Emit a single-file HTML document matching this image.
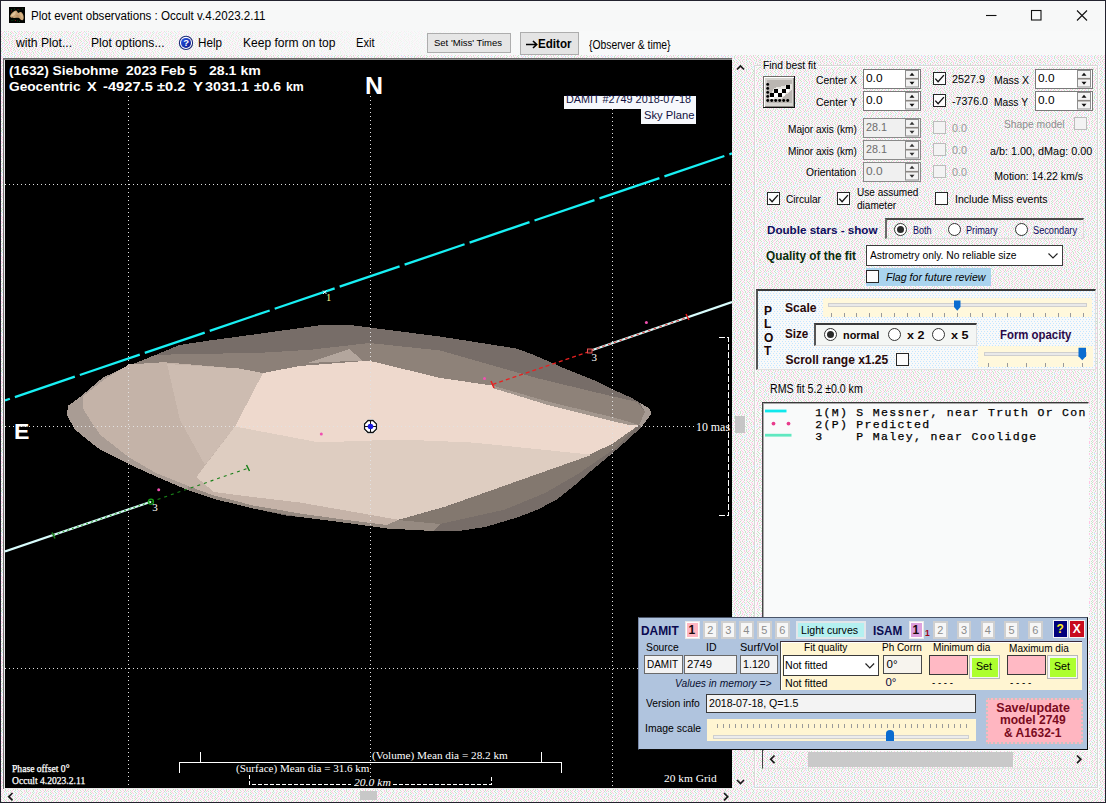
<!DOCTYPE html>
<html><head><meta charset="utf-8"><title>Plot event observations</title>
<style>
*{box-sizing:border-box;margin:0;padding:0}
html,body{width:1106px;height:803px;overflow:hidden;background:#f1f1f1;font-family:"Liberation Sans",sans-serif;font-size:11px;color:#000}
.a{position:absolute;white-space:nowrap}
#win{position:absolute;left:0;top:0;width:1106px;height:803px;background:#efefef;overflow:hidden}
.inp{position:absolute;background:#fff;border:1px solid #7a7a7a}
.inp.dis{background:#f0f0f0;border-color:#8a8a8a}
.cb{position:absolute;width:13px;height:13px;background:#fff;border:1px solid #333}
.cb.dis{border-color:#bcbcbc;background:#f3f3f3}
.cb.on::after{content:"";position:absolute;left:3.5px;top:0.5px;width:4px;height:7.5px;border:solid #111;border-width:0 1.4px 1.4px 0;transform:rotate(40deg)}
.rb{position:absolute;width:13px;height:13px;background:#fff;border:1px solid #333;border-radius:50%}
.rb.on::after{content:"";position:absolute;left:2px;top:2px;width:7px;height:7px;border-radius:50%;background:#2a2a2a}
.sp{position:absolute;width:15px;background:#f0f0f0;border-left:1px solid #c8c8c8}
.sp::before,.sp::after{content:"";position:absolute;left:4px;border:3px solid transparent}
.sp::before{top:1px;border-top-width:0;border-bottom:4px solid #222}
.sp::after{bottom:1px;border-bottom-width:0;border-top:4px solid #222}
</style></head><body>
<div id="win">
<div class="a" style="left:0px;top:0px;width:1106px;height:803px;border:1px solid #23232f;z-index:50;pointer-events:none"></div>
<svg class="a" style="left:0;top:31px" width="1106" height="772" shape-rendering="crispEdges"><defs><pattern id="dz" width="40" height="40" patternUnits="userSpaceOnUse"><rect width="40" height="40" fill="#f8f9f9"/><path fill="#ffc8e4" d="M1 0h1v1h-1zM6 0h1v1h-1zM11 0h1v1h-1zM19 0h1v1h-1zM24 0h1v1h-1zM28 0h1v1h-1zM37 0h1v1h-1zM3 1h1v1h-1zM12 1h1v1h-1zM18 1h1v1h-1zM25 1h1v1h-1zM30 1h1v1h-1zM36 1h1v1h-1zM2 2h1v1h-1zM8 2h1v1h-1zM13 2h1v1h-1zM19 2h1v1h-1zM24 2h1v1h-1zM30 2h1v1h-1zM36 2h1v1h-1zM1 3h1v1h-1zM8 3h1v1h-1zM18 3h1v1h-1zM23 3h1v1h-1zM29 3h1v1h-1zM35 3h1v1h-1zM2 4h1v1h-1zM11 4h1v1h-1zM17 4h1v1h-1zM28 4h1v1h-1zM33 4h1v1h-1zM38 4h1v1h-1zM4 5h1v1h-1zM10 5h1v1h-1zM14 5h1v1h-1zM20 5h1v1h-1zM29 5h1v1h-1zM35 5h1v1h-1zM2 6h1v1h-1zM6 6h1v1h-1zM11 6h1v1h-1zM17 6h1v1h-1zM27 6h1v1h-1zM33 6h1v1h-1zM0 7h1v1h-1zM9 7h1v1h-1zM14 7h1v1h-1zM19 7h1v1h-1zM31 7h1v1h-1zM36 7h1v1h-1zM1 8h1v1h-1zM6 8h1v1h-1zM10 8h1v1h-1zM18 8h1v1h-1zM22 8h1v1h-1zM27 8h1v1h-1zM32 8h1v1h-1zM39 8h1v1h-1zM3 9h1v1h-1zM8 9h1v1h-1zM14 9h1v1h-1zM21 9h1v1h-1zM26 9h1v1h-1zM33 9h1v1h-1zM38 9h1v1h-1zM4 10h1v1h-1zM9 10h1v1h-1zM13 10h1v1h-1zM18 10h1v1h-1zM23 10h1v1h-1zM29 10h1v1h-1zM34 10h1v1h-1zM0 11h1v1h-1zM9 11h1v1h-1zM15 11h1v1h-1zM22 11h1v1h-1zM26 11h1v1h-1zM31 11h1v1h-1zM37 11h1v1h-1zM4 12h1v1h-1zM9 12h1v1h-1zM14 12h1v1h-1zM18 12h1v1h-1zM25 12h1v1h-1zM32 12h1v1h-1zM37 12h1v1h-1zM1 13h1v1h-1zM8 13h1v1h-1zM14 13h1v1h-1zM20 13h1v1h-1zM27 13h1v1h-1zM32 13h1v1h-1zM37 13h1v1h-1zM4 14h1v1h-1zM11 14h1v1h-1zM18 14h1v1h-1zM26 14h1v1h-1zM31 14h1v1h-1zM36 14h1v1h-1zM6 15h1v1h-1zM14 15h1v1h-1zM20 15h1v1h-1zM30 15h1v1h-1zM38 15h1v1h-1zM2 16h1v1h-1zM7 16h1v1h-1zM11 16h1v1h-1zM16 16h1v1h-1zM21 16h1v1h-1zM26 16h1v1h-1zM31 16h1v1h-1zM36 16h1v1h-1zM4 17h1v1h-1zM10 17h1v1h-1zM16 17h1v1h-1zM22 17h1v1h-1zM27 17h1v1h-1zM33 17h1v1h-1zM38 17h1v1h-1zM5 18h1v1h-1zM11 18h1v1h-1zM17 18h1v1h-1zM23 18h1v1h-1zM30 18h1v1h-1zM35 18h1v1h-1zM39 18h1v1h-1zM4 19h1v1h-1zM10 19h1v1h-1zM15 19h1v1h-1zM21 19h1v1h-1zM27 19h1v1h-1zM31 19h1v1h-1zM38 19h1v1h-1zM3 20h1v1h-1zM11 20h1v1h-1zM17 20h1v1h-1zM22 20h1v1h-1zM28 20h1v1h-1zM35 20h1v1h-1zM5 21h1v1h-1zM8 21h1v1h-1zM14 21h1v1h-1zM23 21h1v1h-1zM27 21h1v1h-1zM31 21h1v1h-1zM35 21h1v1h-1zM1 22h1v1h-1zM9 22h1v1h-1zM16 22h1v1h-1zM22 22h1v1h-1zM30 22h1v1h-1zM36 22h1v1h-1zM0 23h1v1h-1zM6 23h1v1h-1zM9 23h1v1h-1zM17 23h1v1h-1zM22 23h1v1h-1zM29 23h1v1h-1zM34 23h1v1h-1zM4 24h1v1h-1zM11 24h1v1h-1zM18 24h1v1h-1zM24 24h1v1h-1zM30 24h1v1h-1zM35 24h1v1h-1zM1 25h1v1h-1zM7 25h1v1h-1zM17 25h1v1h-1zM23 25h1v1h-1zM29 25h1v1h-1zM33 25h1v1h-1zM2 26h1v1h-1zM11 26h1v1h-1zM16 26h1v1h-1zM20 26h1v1h-1zM24 26h1v1h-1zM31 26h1v1h-1zM36 26h1v1h-1zM1 27h1v1h-1zM7 27h1v1h-1zM12 27h1v1h-1zM17 27h1v1h-1zM27 27h1v1h-1zM32 27h1v1h-1zM39 27h1v1h-1zM2 28h1v1h-1zM11 28h1v1h-1zM20 28h1v1h-1zM24 28h1v1h-1zM28 28h1v1h-1zM33 28h1v1h-1zM38 28h1v1h-1zM4 29h1v1h-1zM10 29h1v1h-1zM16 29h1v1h-1zM22 29h1v1h-1zM31 29h1v1h-1zM36 29h1v1h-1zM1 30h1v1h-1zM5 30h1v1h-1zM9 30h1v1h-1zM20 30h1v1h-1zM24 30h1v1h-1zM32 30h1v1h-1zM38 30h1v1h-1zM2 31h1v1h-1zM8 31h1v1h-1zM14 31h1v1h-1zM18 31h1v1h-1zM23 31h1v1h-1zM29 31h1v1h-1zM33 31h1v1h-1zM1 32h1v1h-1zM7 32h1v1h-1zM13 32h1v1h-1zM21 32h1v1h-1zM27 32h1v1h-1zM33 32h1v1h-1zM37 32h1v1h-1zM8 33h1v1h-1zM12 33h1v1h-1zM18 33h1v1h-1zM23 33h1v1h-1zM28 33h1v1h-1zM33 33h1v1h-1zM39 33h1v1h-1zM6 34h1v1h-1zM16 34h1v1h-1zM24 34h1v1h-1zM30 34h1v1h-1zM1 35h1v1h-1zM5 35h1v1h-1zM18 35h1v1h-1zM28 35h1v1h-1zM39 35h1v1h-1zM4 36h1v1h-1zM9 36h1v1h-1zM14 36h1v1h-1zM20 36h1v1h-1zM24 36h1v1h-1zM29 36h1v1h-1zM36 36h1v1h-1zM1 37h1v1h-1zM7 37h1v1h-1zM11 37h1v1h-1zM16 37h1v1h-1zM21 37h1v1h-1zM28 37h1v1h-1zM35 37h1v1h-1zM2 38h1v1h-1zM8 38h1v1h-1zM15 38h1v1h-1zM21 38h1v1h-1zM30 38h1v1h-1zM34 38h1v1h-1zM39 38h1v1h-1zM3 39h1v1h-1zM7 39h1v1h-1zM12 39h1v1h-1zM18 39h1v1h-1zM24 39h1v1h-1zM29 39h1v1h-1zM36 39h1v1h-1z"/><path fill="#c8e4c8" d="M4 0h1v1h-1zM8 0h1v1h-1zM14 0h1v1h-1zM21 0h1v1h-1zM26 0h1v1h-1zM33 0h1v1h-1zM0 1h1v1h-1zM10 1h1v1h-1zM15 1h1v1h-1zM22 1h1v1h-1zM27 1h1v1h-1zM32 1h1v1h-1zM39 1h1v1h-1zM6 2h1v1h-1zM11 2h1v1h-1zM16 2h1v1h-1zM21 2h1v1h-1zM28 2h1v1h-1zM33 2h1v1h-1zM38 2h1v1h-1zM4 3h1v1h-1zM10 3h1v1h-1zM20 3h1v1h-1zM26 3h1v1h-1zM32 3h1v1h-1zM39 3h1v1h-1zM8 4h1v1h-1zM15 4h1v1h-1zM21 4h1v1h-1zM31 4h1v1h-1zM36 4h1v1h-1zM1 5h1v1h-1zM7 5h1v1h-1zM12 5h1v1h-1zM18 5h1v1h-1zM22 5h1v1h-1zM31 5h1v1h-1zM37 5h1v1h-1zM4 6h1v1h-1zM8 6h1v1h-1zM15 6h1v1h-1zM24 6h1v1h-1zM30 6h1v1h-1zM38 6h1v1h-1zM3 7h1v1h-1zM12 7h1v1h-1zM16 7h1v1h-1zM26 7h1v1h-1zM33 7h1v1h-1zM38 7h1v1h-1zM4 8h1v1h-1zM8 8h1v1h-1zM15 8h1v1h-1zM20 8h1v1h-1zM24 8h1v1h-1zM29 8h1v1h-1zM35 8h1v1h-1zM0 9h1v1h-1zM5 9h1v1h-1zM12 9h1v1h-1zM17 9h1v1h-1zM24 9h1v1h-1zM30 9h1v1h-1zM36 9h1v1h-1zM1 10h1v1h-1zM6 10h1v1h-1zM11 10h1v1h-1zM16 10h1v1h-1zM20 10h1v1h-1zM27 10h1v1h-1zM32 10h1v1h-1zM38 10h1v1h-1zM7 11h1v1h-1zM12 11h1v1h-1zM19 11h1v1h-1zM24 11h1v1h-1zM28 11h1v1h-1zM35 11h1v1h-1zM2 12h1v1h-1zM6 12h1v1h-1zM11 12h1v1h-1zM16 12h1v1h-1zM21 12h1v1h-1zM29 12h1v1h-1zM34 12h1v1h-1zM39 12h1v1h-1zM5 13h1v1h-1zM12 13h1v1h-1zM17 13h1v1h-1zM22 13h1v1h-1zM30 13h1v1h-1zM35 13h1v1h-1zM0 14h1v1h-1zM7 14h1v1h-1zM15 14h1v1h-1zM21 14h1v1h-1zM28 14h1v1h-1zM33 14h1v1h-1zM39 14h1v1h-1zM12 15h1v1h-1zM17 15h1v1h-1zM23 15h1v1h-1zM35 15h1v1h-1zM0 16h1v1h-1zM5 16h1v1h-1zM9 16h1v1h-1zM14 16h1v1h-1zM18 16h1v1h-1zM24 16h1v1h-1zM29 16h1v1h-1zM33 16h1v1h-1zM1 17h1v1h-1zM7 17h1v1h-1zM13 17h1v1h-1zM20 17h1v1h-1zM24 17h1v1h-1zM29 17h1v1h-1zM35 17h1v1h-1zM2 18h1v1h-1zM8 18h1v1h-1zM14 18h1v1h-1zM19 18h1v1h-1zM26 18h1v1h-1zM32 18h1v1h-1zM37 18h1v1h-1zM1 19h1v1h-1zM8 19h1v1h-1zM13 19h1v1h-1zM18 19h1v1h-1zM24 19h1v1h-1zM29 19h1v1h-1zM34 19h1v1h-1zM1 20h1v1h-1zM9 20h1v1h-1zM15 20h1v1h-1zM20 20h1v1h-1zM25 20h1v1h-1zM32 20h1v1h-1zM37 20h1v1h-1zM7 21h1v1h-1zM12 21h1v1h-1zM20 21h1v1h-1zM25 21h1v1h-1zM29 21h1v1h-1zM33 21h1v1h-1zM38 21h1v1h-1zM4 22h1v1h-1zM11 22h1v1h-1zM20 22h1v1h-1zM26 22h1v1h-1zM33 22h1v1h-1zM39 22h1v1h-1zM3 23h1v1h-1zM7 23h1v1h-1zM12 23h1v1h-1zM19 23h1v1h-1zM24 23h1v1h-1zM31 23h1v1h-1zM37 23h1v1h-1zM8 24h1v1h-1zM15 24h1v1h-1zM21 24h1v1h-1zM26 24h1v1h-1zM33 24h1v1h-1zM38 24h1v1h-1zM5 25h1v1h-1zM14 25h1v1h-1zM20 25h1v1h-1zM27 25h1v1h-1zM31 25h1v1h-1zM37 25h1v1h-1zM8 26h1v1h-1zM14 26h1v1h-1zM18 26h1v1h-1zM22 26h1v1h-1zM26 26h1v1h-1zM34 26h1v1h-1zM38 26h1v1h-1zM4 27h1v1h-1zM9 27h1v1h-1zM14 27h1v1h-1zM21 27h1v1h-1zM29 27h1v1h-1zM35 27h1v1h-1zM0 28h1v1h-1zM5 28h1v1h-1zM18 28h1v1h-1zM23 28h1v1h-1zM26 28h1v1h-1zM30 28h1v1h-1zM36 28h1v1h-1zM0 29h1v1h-1zM7 29h1v1h-1zM13 29h1v1h-1zM19 29h1v1h-1zM26 29h1v1h-1zM34 29h1v1h-1zM39 29h1v1h-1zM3 30h1v1h-1zM7 30h1v1h-1zM14 30h1v1h-1zM22 30h1v1h-1zM29 30h1v1h-1zM36 30h1v1h-1zM0 31h1v1h-1zM4 31h1v1h-1zM12 31h1v1h-1zM16 31h1v1h-1zM20 31h1v1h-1zM26 31h1v1h-1zM31 31h1v1h-1zM39 31h1v1h-1zM5 32h1v1h-1zM10 32h1v1h-1zM17 32h1v1h-1zM24 32h1v1h-1zM30 32h1v1h-1zM35 32h1v1h-1zM3 33h1v1h-1zM10 33h1v1h-1zM15 33h1v1h-1zM20 33h1v1h-1zM26 33h1v1h-1zM31 33h1v1h-1zM37 33h1v1h-1zM2 34h1v1h-1zM14 34h1v1h-1zM22 34h1v1h-1zM27 34h1v1h-1zM34 34h1v1h-1zM3 35h1v1h-1zM11 35h1v1h-1zM25 35h1v1h-1zM31 35h1v1h-1zM0 36h1v1h-1zM6 36h1v1h-1zM12 36h1v1h-1zM17 36h1v1h-1zM22 36h1v1h-1zM26 36h1v1h-1zM34 36h1v1h-1zM39 36h1v1h-1zM3 37h1v1h-1zM9 37h1v1h-1zM13 37h1v1h-1zM19 37h1v1h-1zM24 37h1v1h-1zM31 37h1v1h-1zM38 37h1v1h-1zM5 38h1v1h-1zM13 38h1v1h-1zM17 38h1v1h-1zM26 38h1v1h-1zM32 38h1v1h-1zM37 38h1v1h-1zM0 39h1v1h-1zM5 39h1v1h-1zM10 39h1v1h-1zM15 39h1v1h-1zM20 39h1v1h-1zM26 39h1v1h-1zM33 39h1v1h-1z"/><path fill="#c8e8ff" d="M17 0h1v1h-1zM5 1h1v1h-1zM34 1h1v1h-1zM6 3h1v1h-1zM15 3h1v1h-1zM0 4h1v1h-1zM5 4h1v1h-1zM13 4h1v1h-1zM24 4h1v1h-1zM26 4h1v1h-1zM25 5h1v1h-1zM22 6h1v1h-1zM35 6h1v1h-1zM21 7h1v1h-1zM28 7h1v1h-1zM3 11h1v1h-1zM24 13h1v1h-1zM2 14h1v1h-1zM9 14h1v1h-1zM24 14h1v1h-1zM3 15h1v1h-1zM27 15h1v1h-1zM39 16h1v1h-1zM6 19h1v1h-1zM2 21h1v1h-1zM18 21h1v1h-1zM14 22h1v1h-1zM14 23h1v1h-1zM27 23h1v1h-1zM1 24h1v1h-1zM3 25h1v1h-1zM10 25h1v1h-1zM12 25h1v1h-1zM5 26h1v1h-1zM8 28h1v1h-1zM15 28h1v1h-1zM11 30h1v1h-1zM17 30h1v1h-1zM27 30h1v1h-1zM35 31h1v1h-1zM0 33h1v1h-1zM5 33h1v1h-1zM9 34h1v1h-1zM12 34h1v1h-1zM19 34h1v1h-1zM36 34h1v1h-1zM8 35h1v1h-1zM15 35h1v1h-1zM21 35h1v1h-1zM33 35h1v1h-1zM37 35h1v1h-1zM32 36h1v1h-1zM23 38h1v1h-1zM28 38h1v1h-1z"/></pattern><pattern id="dp" width="3" height="4" patternUnits="userSpaceOnUse"><rect width="3" height="4" fill="#f8f9f9"/><rect x="1" y="0" width="1" height="1" fill="#c4e6ff"/><rect x="0" y="2" width="1" height="1" fill="#c4e6ff"/></pattern></defs><rect width="1106" height="772" fill="url(#dz)"/></svg>
<div class="a" style="left:1px;top:1px;width:1104px;height:30px;background:#f7f8f8"></div>
<svg class="a" style="left:9px;top:7px" width="16" height="16" viewBox="0 0 16 16"><rect width="16" height="16" fill="#020402"/><path d="M1 9.300C1.500 7.500 3.500 5 5.500 4C6.500 3.300 7.500 3.200 8 4.200C8.500 5.200 9.200 6.200 9.800 5.800C10.500 5 11.500 4.800 12.500 5.300C13.800 6.200 14.800 8.500 14.700 10.500C14.700 12 14.300 13.200 13.200 13.200C12 13.200 11 12 10.200 11.100C9 10.600 7 11 5 10.900C3.500 10.800 1.500 11 1 9.300Z" fill="#c9a276"/><path d="M2 9C3 7 5 5 6.500 4.500C7 5.500 6.500 7.500 5 8.500C4 9 3 9.300 2 9Z" fill="#e2c49c"/><path d="M10.500 6.500C11.500 5.800 12.800 6.300 13.500 8C14 9.500 14 11.500 13.300 12.300C12.500 11 12 9 10.500 6.500Z" fill="#d8b888"/><path d="M7 8.500c1-.5 2.500-.5 3.500.5c-.5 1-2.500 1.200-3.500-.5z" fill="#b88a60"/><g fill="#0a4a14"><rect x="2" y="2" width="1" height="1"/><rect x="5" y="1.500" width="1" height="1"/><rect x="9.500" y="2.500" width="1" height="1"/><rect x="13" y="1.500" width="1" height="1"/><rect x="2.500" y="13" width="1" height="1"/><rect x="4.500" y="12.500" width="1" height="1"/><rect x="8" y="13.500" width="1" height="1"/><rect x="10" y="14" width="1" height="1"/></g><g fill="#7a1010"><rect x="2" y="3.500" width="1" height="1"/><rect x="8.500" y="2" width="1" height="1"/><rect x="6" y="13" width="1" height="1"/></g></svg>
<div class="a" style="left:30.50px;top:10.39px;font-size:12.5px;line-height:12.5px;transform:scaleX(0.9263);transform-origin:0 0;">Plot event observations : Occult v.4.2023.2.11</div>
<svg class="a" style="left:970px;top:1px" width="134" height="30" viewBox="970 1 134 30" fill="none" stroke="#111" stroke-width="1.1"><path d="M986 15.500h10.500"/><rect x="1031.500" y="10.500" width="9.500" height="9.500"/><path d="M1077 10.500l10 10M1087 10.500l-10 10"/></svg>
<div class="a" style="left:1px;top:31px;width:1104px;height:24px;background:linear-gradient(to right,rgba(248,249,249,0) 0,rgba(248,249,249,.55) 250px,rgba(248,249,249,1) 540px)"></div>
<div class="a" style="left:16.00px;top:37.09px;font-size:12.5px;line-height:12.5px;transform:scaleX(0.9712);transform-origin:0 0;">with Plot...</div>
<div class="a" style="left:91.00px;top:37.09px;font-size:12.5px;line-height:12.5px;transform:scaleX(0.9704);transform-origin:0 0;">Plot options...</div>
<svg class="a" style="left:178px;top:35px" width="16" height="16" viewBox="0 0 16 16"><defs><linearGradient id="hg" x1="0" y1="0" x2="1" y2="1"><stop offset="0" stop-color="#2a5ae8"/><stop offset="1" stop-color="#0a1488"/></linearGradient></defs><circle cx="8" cy="7.900" r="6.600" fill="#fff" stroke="#1c2c74" stroke-width="1.100"/><circle cx="8" cy="7.900" r="5" fill="url(#hg)"/><text x="8.200" y="11.300" font-family="Liberation Sans" font-weight="bold" font-size="9.500" fill="#fff" text-anchor="middle">?</text></svg>
<div class="a" style="left:197.50px;top:37.09px;font-size:12.5px;line-height:12.5px;transform:scaleX(0.9335);transform-origin:0 0;">Help</div>
<div class="a" style="left:243.00px;top:37.09px;font-size:12.5px;line-height:12.5px;transform:scaleX(0.9646);transform-origin:0 0;">Keep form on top</div>
<div class="a" style="left:355.50px;top:37.09px;font-size:12.5px;line-height:12.5px;transform:scaleX(0.8878);transform-origin:0 0;">Exit</div>
<div class="a" style="left:427px;top:33px;width:84px;height:20px;background:#e6e6e6;border:1px solid #adadad"></div>
<div class="a" style="left:434.00px;top:37.96px;font-size:9.5px;line-height:9.5px;">Set &#x27;Miss&#x27; Times</div>
<div class="a" style="left:520px;top:32px;width:59px;height:23px;background:#e4e4e4;border:1px solid #adadad"></div>
<svg class="a" style="left:525px;top:39px" width="14" height="11" viewBox="0 0 14 11" fill="none" stroke="#000" stroke-width="1.600"><path d="M1 5.500h10.500M8 2l3.700 3.500l-3.700 3.500"/></svg>
<div class="a" style="left:538.30px;top:37.41px;font-size:13.5px;line-height:13.5px;transform:scaleX(0.8590);transform-origin:0 0;font-weight:bold;">Editor</div>
<div class="a" style="left:589.00px;top:38.74px;font-size:12px;line-height:12px;transform:scaleX(0.8605);transform-origin:0 0;">{Observer &amp; time}</div>
<div class="a" style="left:3px;top:58px;width:729px;height:731px;background:#e8e8e8;border-left:1px solid #707070;border-top:1px solid #6a6a6a"></div>
<div class="a" style="left:4px;top:59px;width:728px;height:1px;background:#8c8c8c"></div>
<div id="plot" class="a" style="left:0px;top:0px;width:732px;height:788px;clip-path:inset(60px 0 0 5px);overflow:hidden;color:#fff">
<div class="a" style="left:5px;top:60px;width:727px;height:728px;background:#000"></div><svg class="a" style="left:5px;top:60px" width="727" height="728" viewBox="5 60 727 728">
<!-- asteroid -->
<g shape-rendering="crispEdges">
<polygon fill="#776d68" points="67,412 68.5,405.5 82,395.5 103,377.5 128,366 155.5,355 179.5,345 209.5,340.5 250,335 286,330 325.5,324.5 345.5,324.5 369.5,327.5 440,336.5 516.5,348.5 534,355 562.5,367.5 593.5,380 614,390 631,397.5 640,403 649.5,408.5 651.5,413.5 642,426.5 628,439.5 612,453.5 589.7,472.2 574.7,485.3 556,500.2 537.4,509.6 518.7,517 500,522.6 485,527 462,530.5 433,531 387,528.5 343.5,522.5 300,517 286,515.5 253.5,508.5 214,499 187.5,490 155,476 128.5,464 100,449.5 92,443.5 75,429.5 67,415.5"/>
<!-- left outer rim -->
<polygon fill="#a99c94" points="67,412 68.5,405.5 82,395.5 103,377.5 128,366 155.5,355 163.6,362.2 229,367.8 200,480 187.5,490 155,476 128.5,464 100,449.5 92,443.5 75,429.5 67,415.5"/>
<!-- mid band top-left -->
<polygon fill="#8c8078" points="127.7,366.2 155.6,354.8 260,352.8 310,349.8 369.5,343 369.5,361.5 355.5,362.5 300,367 263,374 229,367.8 163.6,362.2"/>
<polygon fill="#b3a69d" points="308,363 349.6,349 362,360.5"/>
<!-- right gray facet -->
<polygon fill="#8e8279" points="369.5,343 440,350.5 536.4,378 604.3,394.4 637.2,402 645,412 639,425 631,422.5 612,417 549.6,402 492.6,385.6 440,377.9 369.5,360.8"/>
<!-- big left facet -->
<polygon fill="#c4b3a8" points="82.6,408 83.5,396 104,379.500 129,364.500 163.6,362.2 229,367.8 263,373 235,426.5 196.4,477 187.6,485.7 155,472.500 128.5,457 100.5,435 92,423"/>
<polygon fill="#cdbcb1" points="167,364 239,368.5 263,373 235,426.5 205,465 180,420"/>
<polygon fill="#968a81" points="187.6,486 213.9,495.5 253.4,505.5 300,513.5 343.4,519.5 386.8,525 398.4,519.8 440,524 433,531 387,528.5 343.5,522.5 300,517 253.5,508.5 214,499 187.5,490"/>
<!-- low band -->
<polygon fill="#c5b3a8" points="196.4,477 213.9,492 300,502.5 398.4,519.8 386.8,525 343.4,519.5 300,513.5 253.4,505.5 213.9,495.5 187.6,486"/>
<!-- lower right lighter band -->
<polygon fill="#83786f" points="398,520 445,507 590,455 639,425 614,449 578,474 545,493 505,509.500 440,524"/>
<!-- light lower-central facet -->
<polygon fill="#decdc1" points="235,426.5 319,442.4 400,439.5 473.6,442.6 589.7,454.5 590,455.5 444.7,506.8 398.4,519.8 300,502.5 253,497 213.9,492 196.4,477"/>
<!-- intermediate -->

<!-- bright -->
<polygon fill="#eed9cd" points="263,373 300,366 355.5,361.7 369.5,360.8 440,377.9 492.6,385.6 549.6,402 612,417 631,422.5 639,425 612,444 589.7,454.5 473.6,442.6 400,439.5 319,442.4 235,426.5"/>
<polygon fill="#a69b94" points="640,403 649.5,408.5 651.5,413.5 642,426.5 639,425 645,412"/>
<polygon fill="#a3978e" points="492.6,385.6 549.6,402 612,417 631,422.5 639,425 631,425.5 612,421 549.6,405.500 492.6,388"/>
</g>
<!-- grid -->
<g stroke="#e2e2e2" stroke-width="1" stroke-dasharray="1 3" fill="none" shape-rendering="crispEdges">
<path d="M128.5 96V788M370.5 96V788M612.5 109V788"/>
<path d="M5 184.5H732M5 426.5H694M5 668.5H732"/>
</g>
<!-- cyan chord 1 -->
<line x1="5" y1="400.4" x2="732" y2="153.4" stroke="#18f0f4" stroke-width="2.3" stroke-dasharray="63.3 5.3" stroke-dashoffset="58.15"/>
<path d="M323 290.500l3.500 3.500M326.500 290.500l-3.500 3.500" stroke="#e6ffff" stroke-width="1"/>
<!-- chord 3 right -->
<line x1="591" y1="350.5" x2="732" y2="302" stroke="#d8fcfc" stroke-width="2.3"/>
<line x1="591" y1="350.5" x2="688" y2="317.2" stroke="#e03030" stroke-width="1" stroke-dasharray="3 3"/>
<line x1="492.6" y1="384.5" x2="589" y2="351.6" stroke="#e82020" stroke-width="1.3" stroke-dasharray="4 3"/>
<path d="M491 381l3 7M686 314l3 6" stroke="#e82020" stroke-width="1.5"/>
<rect x="587.5" y="349" width="4.500" height="4" fill="#281010" stroke="#e85050" stroke-width="1"/>
<!-- chord 3 left -->
<line x1="5" y1="551.5" x2="151" y2="501.7" stroke="#d8fcfc" stroke-width="2.2"/>
<line x1="53" y1="535.2" x2="151" y2="501.7" stroke="#20a020" stroke-width="1" stroke-dasharray="2 3"/>
<line x1="151" y1="501.7" x2="247.9" y2="468.2" stroke="#188018" stroke-width="1.1" stroke-dasharray="3 4"/>
<path d="M246.500 465l3 6M52 532.500l3 6" stroke="#188018" stroke-width="1.5"/>
<circle cx="151" cy="501.7" r="2.500" fill="none" stroke="#18a018" stroke-width="1.3"/>
<!-- pink dots -->
<g fill="#f050b0"><circle cx="321.300" cy="434" r="1.500"/><circle cx="484.500" cy="378.400" r="1.500"/><circle cx="158.700" cy="489.700" r="1.500"/><circle cx="646.400" cy="322.500" r="1.500"/></g>
<!-- center marker -->
<circle cx="370.500" cy="426.500" r="7.400" fill="#fff"/>
<polygon points="368,420.500 373,420.500 376.500,424 376.500,429 373,432.500 368,432.500 364.500,429 364.500,424" fill="#fff" stroke="#111" stroke-width="1.300"/>
<path d="M364.500 426.500h12M370.500 420.500v12" stroke="#111" stroke-width="1"/>
<circle cx="370.500" cy="426.500" r="2.800" fill="#1c1ce0"/>
<!-- bracket -->
<path d="M718.500 337.500H728.500V515.500H718.500" stroke="#fff" stroke-width="1" fill="none" stroke-dasharray="6 2" shape-rendering="crispEdges"/>
</svg>
<div class="a" style="left:8px;top:62px;width:298px;height:33px;background:#000"></div>
<div class="a" style="left:9.00px;top:63.85px;font-size:13px;line-height:13px;transform:scaleX(1.0589);transform-origin:0 0;font-weight:bold;color:#fff;">(1632) Siebohme</div>
<div class="a" style="left:126.00px;top:63.85px;font-size:13px;line-height:13px;transform:scaleX(1.0649);transform-origin:0 0;font-weight:bold;color:#fff;">2023 Feb 5</div>
<div class="a" style="left:209.00px;top:63.85px;font-size:13px;line-height:13px;transform:scaleX(1.0859);transform-origin:0 0;font-weight:bold;color:#fff;">28.1 km</div>
<div class="a" style="left:9.00px;top:79.65px;font-size:13px;line-height:13px;transform:scaleX(1.0528);transform-origin:0 0;font-weight:bold;color:#fff;">Geocentric</div>
<div class="a" style="left:87.30px;top:79.65px;font-size:13px;line-height:13px;transform:scaleX(1.1186);transform-origin:0 0;font-weight:bold;color:#fff;">X</div>
<div class="a" style="left:103.00px;top:79.65px;font-size:13px;line-height:13px;transform:scaleX(1.1294);transform-origin:0 0;font-weight:bold;color:#fff;">-4927.5</div>
<div class="a" style="left:157.00px;top:79.65px;font-size:13px;line-height:13px;transform:scaleX(1.1267);transform-origin:0 0;font-weight:bold;color:#fff;">±0.2</div>
<div class="a" style="left:192.50px;top:79.65px;font-size:13px;line-height:13px;transform:scaleX(1.1532);transform-origin:0 0;font-weight:bold;color:#fff;">Y</div>
<div class="a" style="left:205.00px;top:79.65px;font-size:13px;line-height:13px;transform:scaleX(1.1066);transform-origin:0 0;font-weight:bold;color:#fff;">3031.1</div>
<div class="a" style="left:254.00px;top:79.65px;font-size:13px;line-height:13px;transform:scaleX(1.0711);transform-origin:0 0;font-weight:bold;color:#fff;">±0.6</div>
<div class="a" style="left:286.00px;top:79.65px;font-size:13px;line-height:13px;transform:scaleX(0.9474);transform-origin:0 0;font-weight:bold;color:#fff;">km</div>
<div class="a" style="left:365.40px;top:75.32px;font-size:23.5px;line-height:23.5px;transform:scaleX(1.0606);transform-origin:0 0;font-weight:bold;color:#fff;">N</div>
<div class="a" style="left:14.20px;top:421.01px;font-size:22.5px;line-height:22.5px;transform:scaleX(1.0261);transform-origin:0 0;font-weight:bold;color:#fff;">E</div>
<div class="a" style="left:564px;top:96px;width:132px;height:13px;background:#f6f8fc;overflow:hidden"></div>
<div class="a" style="left:641px;top:108px;width:55px;height:16px;background:#f6f8fc"></div>
<div class="a" style="left:565.50px;top:94.23px;font-size:11px;line-height:11px;transform:scaleX(0.9843);transform-origin:0 0;color:#101040;">DAMIT #2749 2018-07-18</div>
<div class="a" style="left:643.50px;top:109.53px;font-size:11px;line-height:11px;transform:scaleX(1.0196);transform-origin:0 0;color:#101040;">Sky Plane</div>
<div class="a" style="left:696.30px;top:420.52px;font-size:12px;line-height:12px;transform:scaleX(0.9904);transform-origin:0 0;color:#fff;font-family:'Liberation Serif',serif;">10 mas</div>
<div class="a" style="left:326.00px;top:293.28px;font-size:10.5px;line-height:10.5px;color:#ffff90;font-family:'Liberation Serif',serif;">1</div>
<div class="a" style="left:591.50px;top:352.23px;font-size:11px;line-height:11px;color:#fff;font-family:'Liberation Serif',serif;">3</div>
<div class="a" style="left:152.30px;top:502.03px;font-size:11px;line-height:11px;color:#fff;font-family:'Liberation Serif',serif;">3</div>
<div class="a" style="left:11.80px;top:764.13px;font-size:10px;line-height:10px;transform:scaleX(0.9597);transform-origin:0 0;color:#fff;font-family:'Liberation Serif',serif;-webkit-text-stroke:.25px #fff;">Phase offset 0°</div>
<div class="a" style="left:11.80px;top:775.93px;font-size:10px;line-height:10px;transform:scaleX(0.9596);transform-origin:0 0;color:#fff;font-family:'Liberation Serif',serif;-webkit-text-stroke:.25px #fff;">Occult 4.2023.2.11</div>
<div class="a" style="left:371.90px;top:751.18px;font-size:10.5px;line-height:10.5px;transform:scaleX(1.0690);transform-origin:0 0;color:#fff;font-family:'Liberation Serif',serif;">(Volume) Mean dia = 28.2 km</div>
<div class="a" style="left:235.60px;top:764.18px;font-size:10.5px;line-height:10.5px;transform:scaleX(1.0535);transform-origin:0 0;color:#fff;font-family:'Liberation Serif',serif;">(Surface) Mean dia = 31.6 km</div>
<div class="a" style="left:353px;top:778px;width:39px;height:10px;background:#000"></div>
<div class="a" style="left:354.00px;top:778.08px;font-size:10.5px;line-height:10.5px;transform:scaleX(1.1070);transform-origin:0 0;font-style:italic;color:#fff;font-family:'Liberation Serif',serif;">20.0 km</div>
<div class="a" style="left:664.30px;top:773.98px;font-size:10.5px;line-height:10.5px;transform:scaleX(1.0885);transform-origin:0 0;color:#fff;font-family:'Liberation Serif',serif;">20 km Grid</div>
<svg class="a" style="left:5px;top:60px" width="727" height="728" viewBox="5 60 727 728" fill="none" stroke="#fff" stroke-width="1" shape-rendering="crispEdges">
<path d="M200.500 752V762.500M541.500 752V762.500M179.500 772.500V762.500H561.500V772.500"/>
<path d="M249.500 775V784.500H351" stroke-dasharray="4 2"/><path d="M393 784.500H491.500V775" stroke-dasharray="4 2"/>
</svg>
</div>
<svg class="a" style="left:732px;top:60px" width="17" height="728" viewBox="0 0 17 728" fill="none" stroke="#1a1a1a" stroke-width="1.700"><path d="M5 9.500l3.500-3.500l3.500 3.500"/><path d="M5 720l3.500 3.500l3.500-3.500"/><rect x="3" y="356" width="10" height="17" fill="#c6c6c6" stroke="none"/></svg>
<svg class="a" style="left:3px;top:788px" width="746" height="14" viewBox="3 788 746 14" fill="none" stroke="#1a1a1a" stroke-width="1.700"><path d="M12.500 793l-3.700 3.700l3.700 3.700"/><path d="M724 793l3.700 3.700l-3.700 3.700"/><rect x="360" y="791" width="17" height="9" fill="#c8c8c8" stroke="none"/></svg>
<div class="a" style="left:754px;top:65px;width:1px;height:723px;background:#d8d8d8"></div>
<div class="a" style="left:755px;top:66px;width:1px;height:721px;background:#fcfcfc"></div>
<div class="a" style="left:754px;top:65px;width:7px;height:1px;background:#d8d8d8"></div>
<div class="a" style="left:818px;top:65px;width:280px;height:1px;background:#d8d8d8"></div>
<div class="a" style="left:755px;top:66px;width:6px;height:1px;background:#fcfcfc"></div>
<div class="a" style="left:818px;top:66px;width:279px;height:1px;background:#fcfcfc"></div>
<div class="a" style="left:1097px;top:65px;width:1px;height:723px;background:#d8d8d8"></div>
<div class="a" style="left:1098px;top:65px;width:1px;height:724px;background:#fcfcfc"></div>
<div class="a" style="left:754px;top:787px;width:344px;height:1px;background:#d8d8d8"></div>
<div class="a" style="left:754px;top:788px;width:345px;height:1px;background:#fcfcfc"></div>
<div class="a" style="left:763.00px;top:59.68px;font-size:11.5px;line-height:11.5px;transform:scaleX(0.8916);transform-origin:0 0;">Find best fit</div>
<svg class="a" style="left:763px;top:76px" width="32" height="32" viewBox="0 0 32 32" shape-rendering="crispEdges">
<rect width="32" height="32" fill="#101010"/><rect width="30.500" height="30.500" fill="#6e6a66"/><rect x="1" y="1" width="29.500" height="29.500" fill="#fff"/><rect x="2" y="2" width="28.500" height="28.500" fill="#8c8884"/><rect x="2" y="2" width="27.500" height="27.500" fill="#d6d4d0"/>
<rect x="4" y="4" width="25" height="23" fill="#bab6b2"/><polygon points="6,22 11,12 29,8 29,14 18,23 6,23" fill="#e6e4e0"/>
<g fill="#000" shape-rendering="auto"><circle cx="4.700" cy="8.400" r="1.450"/><circle cx="4.700" cy="12.400" r="1.450"/><circle cx="4.700" cy="16.400" r="1.450"/><circle cx="4.700" cy="20.400" r="1.450"/><circle cx="4.700" cy="24.500" r="1.450"/><circle cx="8.700" cy="24.500" r="1.450"/><circle cx="12.700" cy="24.500" r="1.450"/><circle cx="16.700" cy="24.500" r="1.450"/><circle cx="20.700" cy="24.500" r="1.450"/><circle cx="24.700" cy="24.500" r="1.450"/></g>
<g fill="#000"><rect x="7" y="17" width="4" height="4"/><rect x="11" y="13" width="4" height="4"/><rect x="15" y="17" width="4" height="4"/><rect x="19" y="13" width="4" height="4"/><rect x="23" y="9" width="4" height="4"/></g>
<g fill="#fff"><rect x="11" y="17" width="4" height="4"/><rect x="15" y="13" width="4" height="4"/><rect x="19" y="17" width="3" height="3"/><rect x="23" y="13" width="3" height="3"/><rect x="7" y="21" width="4" height="2"/></g>
</svg>
<div class="a" style="left:816.00px;top:74.78px;font-size:11.5px;line-height:11.5px;transform:scaleX(0.9034);transform-origin:0 0;">Center X</div>
<div class="a" style="left:816.00px;top:96.78px;font-size:11.5px;line-height:11.5px;transform:scaleX(0.9076);transform-origin:0 0;">Center Y</div>
<div class="inp" style="left:863px;top:69px;width:58px;height:20px;"></div>
<svg class="a" style="left:904px;top:70px" width="16" height="18" viewBox="0 0 16 18"><rect x="1.500" y="0.500" width="13" height="16.500" fill="#f3f3f3" stroke="#8e8e8e"/><path d="M1.500 8.700h13" stroke="#8a8682" stroke-width="1.600"/><path d="M5.500 5.800l2.500-3l2.500 3zM5.500 11.800l2.500 3l2.500-3z" fill="#111"/></svg>
<div class="a" style="left:865.50px;top:72.78px;font-size:11.5px;line-height:11.5px;transform:scaleX(1.0321);transform-origin:0 0;">0.0</div>
<div class="inp" style="left:863px;top:91px;width:58px;height:20px;"></div>
<svg class="a" style="left:904px;top:92px" width="16" height="18" viewBox="0 0 16 18"><rect x="1.500" y="0.500" width="13" height="16.500" fill="#f3f3f3" stroke="#8e8e8e"/><path d="M1.500 8.700h13" stroke="#8a8682" stroke-width="1.600"/><path d="M5.500 5.800l2.500-3l2.500 3zM5.500 11.800l2.500 3l2.500-3z" fill="#111"/></svg>
<div class="a" style="left:865.50px;top:94.78px;font-size:11.5px;line-height:11.5px;transform:scaleX(1.0321);transform-origin:0 0;">0.0</div>
<svg class="a" style="left:933px;top:72px" width="13" height="13" viewBox="0 0 13 13"><rect x=".5" y=".5" width="12" height="12" fill="#fcfcfc" stroke="#262626"/><path d="M2.300 6.600l2.800 3.100l5.800-6.600" fill="none" stroke="#111" stroke-width="1.350"/></svg>
<svg class="a" style="left:933px;top:94px" width="13" height="13" viewBox="0 0 13 13"><rect x=".5" y=".5" width="12" height="12" fill="#fcfcfc" stroke="#262626"/><path d="M2.300 6.600l2.800 3.100l5.800-6.600" fill="none" stroke="#111" stroke-width="1.350"/></svg>
<div class="a" style="left:952.00px;top:73.88px;font-size:11.5px;line-height:11.5px;transform:scaleX(0.9382);transform-origin:0 0;">2527.9</div>
<div class="a" style="left:952.00px;top:95.88px;font-size:11.5px;line-height:11.5px;transform:scaleX(0.9230);transform-origin:0 0;">-7376.0</div>
<div class="a" style="left:994.00px;top:74.93px;font-size:11px;line-height:11px;transform:scaleX(0.9543);transform-origin:0 0;">Mass X</div>
<div class="a" style="left:994.00px;top:96.93px;font-size:11px;line-height:11px;transform:scaleX(0.9321);transform-origin:0 0;">Mass Y</div>
<div class="inp" style="left:1035px;top:69px;width:58px;height:20px;"></div>
<svg class="a" style="left:1076px;top:70px" width="16" height="18" viewBox="0 0 16 18"><rect x="1.500" y="0.500" width="13" height="16.500" fill="#f3f3f3" stroke="#8e8e8e"/><path d="M1.500 8.700h13" stroke="#8a8682" stroke-width="1.600"/><path d="M5.500 5.800l2.500-3l2.500 3zM5.500 11.800l2.500 3l2.500-3z" fill="#111"/></svg>
<div class="a" style="left:1037.50px;top:72.78px;font-size:11.5px;line-height:11.5px;transform:scaleX(1.0321);transform-origin:0 0;">0.0</div>
<div class="inp" style="left:1035px;top:91px;width:58px;height:20px;"></div>
<svg class="a" style="left:1076px;top:92px" width="16" height="18" viewBox="0 0 16 18"><rect x="1.500" y="0.500" width="13" height="16.500" fill="#f3f3f3" stroke="#8e8e8e"/><path d="M1.500 8.700h13" stroke="#8a8682" stroke-width="1.600"/><path d="M5.500 5.800l2.500-3l2.500 3zM5.500 11.800l2.500 3l2.500-3z" fill="#111"/></svg>
<div class="a" style="left:1037.50px;top:94.78px;font-size:11.5px;line-height:11.5px;transform:scaleX(1.0321);transform-origin:0 0;">0.0</div>
<div class="a" style="left:787.80px;top:124.08px;font-size:11.5px;line-height:11.5px;transform:scaleX(0.8755);transform-origin:0 0;">Major axis (km)</div>
<div class="a" style="left:787.80px;top:145.88px;font-size:11.5px;line-height:11.5px;transform:scaleX(0.8755);transform-origin:0 0;">Minor axis (km)</div>
<div class="a" style="left:805.70px;top:167.08px;font-size:11.5px;line-height:11.5px;transform:scaleX(0.8941);transform-origin:0 0;">Orientation</div>
<div class="inp dis" style="left:863px;top:118px;width:58px;height:20px;"></div>
<svg class="a" style="left:904px;top:119px" width="16" height="18" viewBox="0 0 16 18"><rect x="1.500" y="0.500" width="13" height="16.500" fill="#f3f3f3" stroke="#8e8e8e"/><path d="M1.500 8.700h13" stroke="#8a8682" stroke-width="1.600"/><path d="M5.500 5.800l2.500-3l2.500 3zM5.500 11.800l2.500 3l2.500-3z" fill="#333"/></svg>
<div class="a" style="left:865.50px;top:121.78px;font-size:11.5px;line-height:11.5px;transform:scaleX(0.9382);transform-origin:0 0;color:#6d6d6d;">28.1</div>
<div class="inp dis" style="left:863px;top:140px;width:58px;height:20px;"></div>
<svg class="a" style="left:904px;top:141px" width="16" height="18" viewBox="0 0 16 18"><rect x="1.500" y="0.500" width="13" height="16.500" fill="#f3f3f3" stroke="#8e8e8e"/><path d="M1.500 8.700h13" stroke="#8a8682" stroke-width="1.600"/><path d="M5.500 5.800l2.500-3l2.500 3zM5.500 11.800l2.500 3l2.500-3z" fill="#333"/></svg>
<div class="a" style="left:865.50px;top:143.78px;font-size:11.5px;line-height:11.5px;transform:scaleX(0.9382);transform-origin:0 0;color:#6d6d6d;">28.1</div>
<div class="inp dis" style="left:863px;top:162px;width:58px;height:20px;"></div>
<svg class="a" style="left:904px;top:163px" width="16" height="18" viewBox="0 0 16 18"><rect x="1.500" y="0.500" width="13" height="16.500" fill="#f3f3f3" stroke="#8e8e8e"/><path d="M1.500 8.700h13" stroke="#8a8682" stroke-width="1.600"/><path d="M5.500 5.800l2.500-3l2.500 3zM5.500 11.800l2.500 3l2.500-3z" fill="#333"/></svg>
<div class="a" style="left:865.50px;top:165.78px;font-size:11.5px;line-height:11.5px;transform:scaleX(1.0321);transform-origin:0 0;color:#6d6d6d;">0.0</div>
<svg class="a" style="left:933px;top:121px" width="13" height="13" viewBox="0 0 13 13"><rect x=".5" y=".5" width="12" height="12" fill="#f3f3f3" stroke="#bcbcbc"/></svg>
<div class="a" style="left:952.00px;top:123.18px;font-size:11.5px;line-height:11.5px;transform:scaleX(0.9383);transform-origin:0 0;color:#9a9a9a;">0.0</div>
<svg class="a" style="left:933px;top:143px" width="13" height="13" viewBox="0 0 13 13"><rect x=".5" y=".5" width="12" height="12" fill="#f3f3f3" stroke="#bcbcbc"/></svg>
<div class="a" style="left:952.00px;top:144.98px;font-size:11.5px;line-height:11.5px;transform:scaleX(0.9383);transform-origin:0 0;color:#9a9a9a;">0.0</div>
<svg class="a" style="left:933px;top:165px" width="13" height="13" viewBox="0 0 13 13"><rect x=".5" y=".5" width="12" height="12" fill="#f3f3f3" stroke="#bcbcbc"/></svg>
<div class="a" style="left:952.00px;top:166.78px;font-size:11.5px;line-height:11.5px;transform:scaleX(0.9383);transform-origin:0 0;color:#9a9a9a;">0.0</div>
<div class="a" style="left:1004.40px;top:118.68px;font-size:11.5px;line-height:11.5px;transform:scaleX(0.8942);transform-origin:0 0;color:#8f8f8f;">Shape model</div>
<svg class="a" style="left:1074px;top:117px" width="13" height="13" viewBox="0 0 13 13"><rect x=".5" y=".5" width="12" height="12" fill="#f3f3f3" stroke="#bcbcbc"/></svg>
<div class="a" style="left:989.80px;top:146.37px;font-size:10.5px;line-height:10.5px;transform:scaleX(1.0298);transform-origin:0 0;">a/b: 1.00, dMag: 0.00</div>
<div class="a" style="left:994.30px;top:171.47px;font-size:10.5px;line-height:10.5px;">Motion: 14.22 km/s</div>
<svg class="a" style="left:767px;top:192px" width="13" height="13" viewBox="0 0 13 13"><rect x=".5" y=".5" width="12" height="12" fill="#fcfcfc" stroke="#262626"/><path d="M2.300 6.600l2.800 3.100l5.800-6.600" fill="none" stroke="#111" stroke-width="1.350"/></svg>
<div class="a" style="left:785.80px;top:194.08px;font-size:11.5px;line-height:11.5px;transform:scaleX(0.8834);transform-origin:0 0;">Circular</div>
<svg class="a" style="left:837px;top:192px" width="13" height="13" viewBox="0 0 13 13"><rect x=".5" y=".5" width="12" height="12" fill="#fcfcfc" stroke="#262626"/><path d="M2.300 6.600l2.800 3.100l5.800-6.600" fill="none" stroke="#111" stroke-width="1.350"/></svg>
<div class="a" style="left:856.60px;top:187.72px;font-size:10px;line-height:10px;transform:scaleX(1.0043);transform-origin:0 0;">Use assumed</div>
<div class="a" style="left:856.60px;top:200.52px;font-size:10px;line-height:10px;transform:scaleX(1.0049);transform-origin:0 0;">diameter</div>
<svg class="a" style="left:935px;top:192px" width="13" height="13" viewBox="0 0 13 13"><rect x=".5" y=".5" width="12" height="12" fill="#fcfcfc" stroke="#262626"/></svg>
<div class="a" style="left:954.50px;top:194.08px;font-size:11.5px;line-height:11.5px;transform:scaleX(0.9159);transform-origin:0 0;">Include Miss events</div>
<div class="a" style="left:766.80px;top:224.68px;font-size:11.5px;line-height:11.5px;transform:scaleX(1.0113);transform-origin:0 0;font-weight:bold;color:#0c0c5c;">Double stars - show</div>
<div class="a" style="left:885px;top:218px;width:199px;height:21px;border:1px solid #dcdcdc;border-top:2px solid #4a4a4a;border-left:2px solid #6a6a6a"></div>
<div class="rb on" style="left:894px;top:223px"></div>
<div class="a" style="left:912.50px;top:226.22px;font-size:10px;line-height:10px;transform:scaleX(0.8993);transform-origin:0 0;color:#0c0c5c;">Both</div>
<div class="rb" style="left:948px;top:223px"></div>
<div class="a" style="left:966.00px;top:226.22px;font-size:10px;line-height:10px;transform:scaleX(0.9174);transform-origin:0 0;color:#0c0c5c;">Primary</div>
<div class="rb" style="left:1015px;top:223px"></div>
<div class="a" style="left:1033.00px;top:226.22px;font-size:10px;line-height:10px;transform:scaleX(0.9203);transform-origin:0 0;color:#0c0c5c;">Secondary</div>
<div class="a" style="left:766.00px;top:249.74px;font-size:12px;line-height:12px;transform:scaleX(0.9854);transform-origin:0 0;font-weight:bold;color:#0a2a0a;">Quality of the fit</div>
<div class="a" style="left:866px;top:245px;width:197px;height:21px;background:#fff;border:1px solid #3c3c3c"></div>
<div class="a" style="left:869.50px;top:250.08px;font-size:11.5px;line-height:11.5px;transform:scaleX(0.8931);transform-origin:0 0;">Astrometry only. No reliable size</div>
<svg class="a" style="left:1046px;top:250px" width="14" height="12" viewBox="0 0 14 12" fill="none" stroke="#222" stroke-width="1.200"><path d="M2.500 3.500l4.500 4.500l4.500-4.500"/></svg>
<div class="a" style="left:866px;top:268px;width:125px;height:18px;background:#aad4ee"></div>
<svg class="a" style="left:866px;top:270px" width="13" height="13" viewBox="0 0 13 13"><rect x=".5" y=".5" width="12" height="12" fill="#fcfcfc" stroke="#262626"/></svg>
<div class="a" style="left:885.50px;top:272.08px;font-size:11.5px;line-height:11.5px;transform:scaleX(0.9211);transform-origin:0 0;font-style:italic;">Flag for future review</div>
<div class="a" style="left:756px;top:289px;width:340px;height:81px;background:#eef6fd;border:1px solid #e0e0e0;border-top:2px solid #3a3a3a;border-left:2px solid #555"></div>
<svg class="a" style="left:758px;top:291px" width="337" height="78" shape-rendering="crispEdges"><rect width="337" height="78" fill="url(#dp)"/></svg>
<div class="a" style="left:764.00px;top:305.14px;font-size:12px;line-height:12px;font-weight:bold;color:#1a0505;">P</div>
<div class="a" style="left:764.00px;top:318.14px;font-size:12px;line-height:12px;font-weight:bold;color:#1a0505;">L</div>
<div class="a" style="left:764.00px;top:331.64px;font-size:12px;line-height:12px;font-weight:bold;color:#1a0505;">O</div>
<div class="a" style="left:764.00px;top:344.64px;font-size:12px;line-height:12px;font-weight:bold;color:#1a0505;">T</div>
<div class="a" style="left:784.50px;top:302.14px;font-size:12px;line-height:12px;transform:scaleX(1.0045);transform-origin:0 0;font-weight:bold;color:#2a0808;">Scale</div>
<div class="a" style="left:784.50px;top:327.74px;font-size:12px;line-height:12px;transform:scaleX(0.9703);transform-origin:0 0;font-weight:bold;color:#2a0808;">Size</div>
<div class="a" style="left:785.50px;top:353.84px;font-size:12px;line-height:12px;font-weight:bold;color:#2a0808;">Scroll range x1.25</div>
<svg class="a" style="left:896px;top:353px" width="13" height="13" viewBox="0 0 13 13"><rect x=".5" y=".5" width="12" height="12" fill="#fcfcfc" stroke="#262626"/></svg>
<div class="a" style="left:823px;top:298px;width:269px;height:19px;background:#fff8dc"></div>
<div class="a" style="left:828px;top:303px;width:259px;height:4px;background:#e9e9e9;border:1px solid #cfcfcf"></div>
<svg class="a" style="left:823px;top:298px" width="269" height="19" viewBox="823 298 269 19" shape-rendering="crispEdges"><rect x="830.9" y="313" width="1" height="3.500" fill="#9a9a9a"/><rect x="843.5" y="313" width="1" height="3.500" fill="#9a9a9a"/><rect x="856.1" y="313" width="1" height="3.500" fill="#9a9a9a"/><rect x="868.7" y="313" width="1" height="3.500" fill="#9a9a9a"/><rect x="881.3" y="313" width="1" height="3.500" fill="#9a9a9a"/><rect x="893.9" y="313" width="1" height="3.500" fill="#9a9a9a"/><rect x="906.5" y="313" width="1" height="3.500" fill="#9a9a9a"/><rect x="919.1" y="313" width="1" height="3.500" fill="#9a9a9a"/><rect x="931.7" y="313" width="1" height="3.500" fill="#9a9a9a"/><rect x="944.3" y="313" width="1" height="3.500" fill="#9a9a9a"/><rect x="956.9" y="313" width="1" height="3.500" fill="#9a9a9a"/><rect x="969.5" y="313" width="1" height="3.500" fill="#9a9a9a"/><rect x="982.1" y="313" width="1" height="3.500" fill="#9a9a9a"/><rect x="994.7" y="313" width="1" height="3.500" fill="#9a9a9a"/><rect x="1007.3" y="313" width="1" height="3.500" fill="#9a9a9a"/><rect x="1019.9" y="313" width="1" height="3.500" fill="#9a9a9a"/><rect x="1032.5" y="313" width="1" height="3.500" fill="#9a9a9a"/><rect x="1045.1" y="313" width="1" height="3.500" fill="#9a9a9a"/><rect x="1057.7" y="313" width="1" height="3.500" fill="#9a9a9a"/><rect x="1070.3" y="313" width="1" height="3.500" fill="#9a9a9a"/><rect x="1082.9" y="313" width="1" height="3.500" fill="#9a9a9a"/></svg>
<svg class="a" style="left:953px;top:300px" width="9" height="12" viewBox="0 0 9 12"><path d="M1 .5h6.500v6.500l-3.250 3.800l-3.250-3.800z" fill="#0a6cd0"/></svg>
<div class="a" style="left:814px;top:323px;width:163px;height:23px;border:1px solid #dcdcdc;border-top:2px solid #3a3a3a;border-left:2px solid #555;background:#f4f6f4"></div>
<div class="rb on" style="left:824px;top:328px"></div>
<div class="a" style="left:842.80px;top:330.08px;font-size:11.5px;line-height:11.5px;transform:scaleX(0.9442);transform-origin:0 0;font-weight:bold;color:#100505;">normal</div>
<div class="rb" style="left:888px;top:328px"></div>
<div class="a" style="left:906.60px;top:330.08px;font-size:11.5px;line-height:11.5px;transform:scaleX(1.0884);transform-origin:0 0;font-weight:bold;color:#100505;">x 2</div>
<div class="rb" style="left:932px;top:328px"></div>
<div class="a" style="left:950.70px;top:330.08px;font-size:11.5px;line-height:11.5px;transform:scaleX(1.1009);transform-origin:0 0;font-weight:bold;color:#100505;">x 5</div>
<div class="a" style="left:999.60px;top:329.44px;font-size:12px;line-height:12px;transform:scaleX(0.9476);transform-origin:0 0;font-weight:bold;color:#2a0848;">Form opacity</div>
<div class="a" style="left:978px;top:346px;width:115px;height:21px;background:#fff8dc"></div>
<div class="a" style="left:984px;top:352px;width:103px;height:4px;background:#e9e9e9;border:1px solid #cfcfcf"></div>
<svg class="a" style="left:978px;top:346px" width="115" height="21" viewBox="978 346 115 21" shape-rendering="crispEdges"><rect x="988.2" y="363" width="1" height="3.500" fill="#9a9a9a"/><rect x="1007.0" y="363" width="1" height="3.500" fill="#9a9a9a"/><rect x="1025.8" y="363" width="1" height="3.500" fill="#9a9a9a"/><rect x="1044.5" y="363" width="1" height="3.500" fill="#9a9a9a"/><rect x="1063.3" y="363" width="1" height="3.500" fill="#9a9a9a"/><rect x="1082.1" y="363" width="1" height="3.500" fill="#9a9a9a"/></svg>
<svg class="a" style="left:1077px;top:347px" width="11" height="15" viewBox="0 0 11 15"><path d="M1.500 .8h7.500v8.500l-3.750 4l-3.750-4z" fill="#0a6cd0"/></svg>
<div class="a" style="left:770.30px;top:383.14px;font-size:12px;line-height:12px;transform:scaleX(0.8805);transform-origin:0 0;">RMS fit 5.2 ±0.0 km</div>
<div class="a" style="left:762px;top:402px;width:327px;height:367px;background:#f9fafa;border:1px solid #e4e4e4;border-top:1px solid #3a3a3a;border-left:1px solid #444;box-shadow:inset 1px 1px 0 #a8a8a8"></div>
<div class="a" style="left:815.2px;top:407.24px;font-family:'Liberation Mono',monospace;font-size:11.5px;line-height:11.5px;letter-spacing:1.329px;white-space:pre;-webkit-text-stroke:.25px #000">1(M) S Messner, near Truth Or Con</div>
<div class="a" style="left:815.2px;top:419.04px;font-family:'Liberation Mono',monospace;font-size:11.5px;line-height:11.5px;letter-spacing:1.329px;white-space:pre;-webkit-text-stroke:.25px #000">2(P) Predicted</div>
<div class="a" style="left:815.2px;top:430.84px;font-family:'Liberation Mono',monospace;font-size:11.5px;line-height:11.5px;letter-spacing:1.329px;white-space:pre;-webkit-text-stroke:.25px #000">3    P Maley, near Coolidge</div>
<svg class="a" style="left:764px;top:404px" width="50" height="40" viewBox="764 404 50 40"><path d="M765 411h21.500" stroke="#10e8ec" stroke-width="2.800"/><circle cx="773.500" cy="423.600" r="1.900" fill="#e83c8c"/><circle cx="788.500" cy="423.600" r="1.900" fill="#e83c8c"/><path d="M765 435.200h26.500" stroke="#60e8c0" stroke-width="2.800"/></svg>
<div class="a" style="left:1087px;top:404px;width:2px;height:364px;background:#f9fafa"></div>
<svg class="a" style="left:763px;top:751px" width="325" height="17" shape-rendering="crispEdges"><rect width="325" height="17" fill="url(#dz)"/></svg>
<svg class="a" style="left:765px;top:751px" width="323" height="17" viewBox="765 751 323 17" fill="none" stroke="#1a1a1a" stroke-width="1.700"><rect x="808" y="752" width="205" height="15" fill="#c9c9c9" stroke="none"/><path d="M774.500 755.500l-3.800 3.800l3.800 3.800"/><path d="M1077 755.500l3.800 3.800l-3.800 3.800"/></svg>
<div class="a" style="left:638px;top:617px;width:450px;height:133px;background:#b0c4de;border:1px solid #4a5468;border-left-color:#7888a8;border-right:1px solid #0a0a0a;border-bottom:1px solid #0a0a0a"></div>
<div class="a" style="left:640.80px;top:623.95px;font-size:13px;line-height:13px;transform:scaleX(0.9160);transform-origin:0 0;font-weight:bold;color:#0a0a50;">DAMIT</div>
<div class="a" style="left:684.5px;top:621px;width:15.0px;height:17.5px;background:#fdfdfd;border:1px solid #e8e8e8"></div>
<div class="a" style="left:686.5px;top:623px;width:11.0px;height:13.5px;background:#ffb6c1"></div>
<div class="a" style="left:688.60px;top:624.14px;font-size:12px;line-height:12px;font-weight:bold;color:#1a0a0a;">1</div>
<div class="a" style="left:703px;top:621px;width:14.5px;height:17.5px;background:#f6f6f6;border:2px solid #cfcfcf"></div>
<div class="a" style="left:707.15px;top:624.83px;font-size:11px;line-height:11px;color:#8c8c8c;">2</div>
<div class="a" style="left:721px;top:621px;width:14.5px;height:17.5px;background:#f6f6f6;border:2px solid #cfcfcf"></div>
<div class="a" style="left:725.15px;top:624.83px;font-size:11px;line-height:11px;color:#8c8c8c;">3</div>
<div class="a" style="left:739px;top:621px;width:14.5px;height:17.5px;background:#f6f6f6;border:2px solid #cfcfcf"></div>
<div class="a" style="left:743.15px;top:624.83px;font-size:11px;line-height:11px;color:#8c8c8c;">4</div>
<div class="a" style="left:757px;top:621px;width:14.5px;height:17.5px;background:#f6f6f6;border:2px solid #cfcfcf"></div>
<div class="a" style="left:761.15px;top:624.83px;font-size:11px;line-height:11px;color:#8c8c8c;">5</div>
<div class="a" style="left:775px;top:621px;width:14.5px;height:17.5px;background:#f6f6f6;border:2px solid #cfcfcf"></div>
<div class="a" style="left:779.15px;top:624.83px;font-size:11px;line-height:11px;color:#8c8c8c;">6</div>
<div class="a" style="left:796px;top:621px;width:70px;height:17.5px;background:#b4f0f0;border:2px solid #e2e6ea"></div>
<div class="a" style="left:801.40px;top:625.28px;font-size:11.5px;line-height:11.5px;transform:scaleX(0.9209);transform-origin:0 0;">Light curves</div>
<div class="a" style="left:872.60px;top:623.95px;font-size:13px;line-height:13px;transform:scaleX(0.9046);transform-origin:0 0;font-weight:bold;color:#0a0a50;">ISAM</div>
<div class="a" style="left:908.5px;top:621px;width:15.0px;height:17.5px;background:#fdfdfd;border:1px solid #e8e8e8"></div>
<div class="a" style="left:910.5px;top:623px;width:11.0px;height:13.5px;background:#dda0dd"></div>
<div class="a" style="left:912.60px;top:624.14px;font-size:12px;line-height:12px;font-weight:bold;color:#1a0a0a;">1</div>
<div class="a" style="left:925.00px;top:628.85px;font-size:8.5px;line-height:8.5px;font-weight:bold;color:#a00010;">1</div>
<div class="a" style="left:933.2px;top:621px;width:14.5px;height:17.5px;background:#f6f6f6;border:2px solid #cfcfcf"></div>
<div class="a" style="left:937.35px;top:624.83px;font-size:11px;line-height:11px;color:#8c8c8c;">2</div>
<div class="a" style="left:956.95px;top:621px;width:14.5px;height:17.5px;background:#f6f6f6;border:2px solid #cfcfcf"></div>
<div class="a" style="left:961.10px;top:624.83px;font-size:11px;line-height:11px;color:#8c8c8c;">3</div>
<div class="a" style="left:980.7px;top:621px;width:14.5px;height:17.5px;background:#f6f6f6;border:2px solid #cfcfcf"></div>
<div class="a" style="left:984.85px;top:624.83px;font-size:11px;line-height:11px;color:#8c8c8c;">4</div>
<div class="a" style="left:1004.45px;top:621px;width:14.5px;height:17.5px;background:#f6f6f6;border:2px solid #cfcfcf"></div>
<div class="a" style="left:1008.60px;top:624.83px;font-size:11px;line-height:11px;color:#8c8c8c;">5</div>
<div class="a" style="left:1028.2px;top:621px;width:14.5px;height:17.5px;background:#f6f6f6;border:2px solid #cfcfcf"></div>
<div class="a" style="left:1032.35px;top:624.83px;font-size:11px;line-height:11px;color:#8c8c8c;">6</div>
<div class="a" style="left:1052.5px;top:620px;width:15.0px;height:17.5px;background:#00007c;border:1.500px solid #f4f4f4"></div>
<div class="a" style="left:1056.50px;top:623.14px;font-size:12px;line-height:12px;font-weight:bold;color:#ffee20;">?</div>
<div class="a" style="left:1069px;top:620px;width:15.5px;height:17.5px;background:#c80a1e;border:1.500px solid #f4f4f4"></div>
<div class="a" style="left:1072.70px;top:623.14px;font-size:12px;line-height:12px;font-weight:bold;color:#fff;">X</div>
<div class="a" style="left:646.30px;top:641.98px;font-size:11.5px;line-height:11.5px;transform:scaleX(0.8974);transform-origin:0 0;">Source</div>
<div class="a" style="left:705.50px;top:641.98px;font-size:11.5px;line-height:11.5px;transform:scaleX(0.9130);transform-origin:0 0;">ID</div>
<div class="a" style="left:739.60px;top:641.98px;font-size:11.5px;line-height:11.5px;transform:scaleX(0.9535);transform-origin:0 0;">Surf/Vol</div>
<div class="a" style="left:643.5px;top:654.5px;width:39.0px;height:19.0px;background:#f3f3f3;border:1px solid #6a6a6a"></div>
<div class="a" style="left:647.00px;top:658.88px;font-size:11.5px;line-height:11.5px;transform:scaleX(0.8665);transform-origin:0 0;">DAMIT</div>
<div class="a" style="left:684.3px;top:654.5px;width:52.700000000000045px;height:19.0px;background:#f3f3f3;border:1px solid #6a6a6a"></div>
<div class="a" style="left:686.90px;top:658.88px;font-size:11.5px;line-height:11.5px;transform:scaleX(0.9811);transform-origin:0 0;">2749</div>
<div class="a" style="left:739.6px;top:654.5px;width:38.39999999999998px;height:19.0px;background:#f3f3f3;border:1px solid #6a6a6a"></div>
<div class="a" style="left:742.80px;top:658.88px;font-size:11.5px;line-height:11.5px;transform:scaleX(0.9278);transform-origin:0 0;">1.120</div>
<div class="a" style="left:674.50px;top:677.78px;font-size:11.5px;line-height:11.5px;transform:scaleX(0.8916);transform-origin:0 0;font-style:italic;color:#0a1030;">Values in memory =&gt;</div>
<div class="a" style="left:780px;top:641px;width:301.5px;height:48.5px;background:#fff5d2;border-left:1px solid #444;border-top:1px solid #3a2a3a;box-shadow:inset 1px 1px 0 #fff"></div>
<div class="a" style="left:803.60px;top:642.38px;font-size:11.5px;line-height:11.5px;transform:scaleX(0.8819);transform-origin:0 0;">Fit quality</div>
<div class="a" style="left:881.70px;top:642.38px;font-size:11.5px;line-height:11.5px;transform:scaleX(0.8649);transform-origin:0 0;">Ph Corrn</div>
<div class="a" style="left:932.70px;top:642.38px;font-size:11.5px;line-height:11.5px;transform:scaleX(0.8790);transform-origin:0 0;">Minimum dia</div>
<div class="a" style="left:1008.70px;top:642.88px;font-size:11.5px;line-height:11.5px;transform:scaleX(0.8745);transform-origin:0 0;">Maximum dia</div>
<div class="a" style="left:782.5px;top:655px;width:96.0px;height:21px;background:#fff;border:1px solid #3a3a3a"></div>
<div class="a" style="left:785.00px;top:659.58px;font-size:11.5px;line-height:11.5px;transform:scaleX(0.9235);transform-origin:0 0;">Not fitted</div>
<svg class="a" style="left:863px;top:660px" width="14" height="12" viewBox="0 0 14 12" fill="none" stroke="#222" stroke-width="1.200"><path d="M2.500 3.500l4.300 4.300l4.300-4.300"/></svg>
<div class="a" style="left:883px;top:655px;width:39px;height:19px;background:#f7f4ee;border:1px solid #4a4a4a"></div>
<div class="a" style="left:886.50px;top:659.18px;font-size:11.5px;line-height:11.5px;">0°</div>
<div class="a" style="left:929px;top:655px;width:39px;height:20px;background:#ffb9c4;border:1px solid #3a3a3a"></div>
<div class="a" style="left:969px;top:655px;width:31px;height:24px;background:#f6f6f6;border:1px solid #b8b8b8"></div>
<div class="a" style="left:971.5px;top:657.5px;width:26.0px;height:19.0px;background:#adff2f"></div>
<div class="a" style="left:976.00px;top:661.38px;font-size:11.5px;line-height:11.5px;transform:scaleX(0.9269);transform-origin:0 0;">Set</div>
<div class="a" style="left:1007px;top:655px;width:39px;height:20px;background:#ffb9c4;border:1px solid #3a3a3a"></div>
<div class="a" style="left:1047px;top:655px;width:31px;height:24px;background:#f6f6f6;border:1px solid #b8b8b8"></div>
<div class="a" style="left:1049.5px;top:657.5px;width:26.0px;height:19.0px;background:#adff2f"></div>
<div class="a" style="left:1054.00px;top:661.38px;font-size:11.5px;line-height:11.5px;transform:scaleX(0.9269);transform-origin:0 0;">Set</div>
<div class="a" style="left:785.00px;top:677.98px;font-size:11.5px;line-height:11.5px;transform:scaleX(0.9235);transform-origin:0 0;">Not fitted</div>
<div class="a" style="left:885.40px;top:677.18px;font-size:11.5px;line-height:11.5px;color:#0a0a40;">0°</div>
<div class="a" style="left:931.60px;top:676.88px;font-size:11.5px;line-height:11.5px;transform:scaleX(0.8392);transform-origin:0 0;">- - - -</div>
<div class="a" style="left:1009.70px;top:676.88px;font-size:11.5px;line-height:11.5px;transform:scaleX(0.8553);transform-origin:0 0;">- - - -</div>
<div class="a" style="left:646.30px;top:697.78px;font-size:11.5px;line-height:11.5px;transform:scaleX(0.8936);transform-origin:0 0;">Version info</div>
<div class="a" style="left:706px;top:694px;width:270px;height:19px;background:#f3f3f3;border:1px solid #3a3a3a"></div>
<div class="a" style="left:709.20px;top:698.38px;font-size:11.5px;line-height:11.5px;transform:scaleX(0.9219);transform-origin:0 0;">2018-07-18, Q=1.5</div>
<div class="a" style="left:645.20px;top:722.58px;font-size:11.5px;line-height:11.5px;transform:scaleX(0.9032);transform-origin:0 0;">Image scale</div>
<div class="a" style="left:706.5px;top:718.5px;width:269.5px;height:22.5px;background:#fff5d2"></div>
<svg class="a" style="left:706px;top:718px" width="270" height="23" viewBox="706 718 270 23" shape-rendering="crispEdges"><rect x="716.7" y="724" width="1" height="4" fill="#9a9a9a"/><rect x="722.8" y="724" width="1" height="4" fill="#9a9a9a"/><rect x="728.9" y="724" width="1" height="4" fill="#9a9a9a"/><rect x="734.9" y="724" width="1" height="4" fill="#9a9a9a"/><rect x="741.0" y="724" width="1" height="4" fill="#9a9a9a"/><rect x="747.1" y="724" width="1" height="4" fill="#9a9a9a"/><rect x="753.2" y="724" width="1" height="4" fill="#9a9a9a"/><rect x="759.3" y="724" width="1" height="4" fill="#9a9a9a"/><rect x="765.3" y="724" width="1" height="4" fill="#9a9a9a"/><rect x="771.4" y="724" width="1" height="4" fill="#9a9a9a"/><rect x="777.5" y="724" width="1" height="4" fill="#9a9a9a"/><rect x="783.6" y="724" width="1" height="4" fill="#9a9a9a"/><rect x="789.7" y="724" width="1" height="4" fill="#9a9a9a"/><rect x="795.7" y="724" width="1" height="4" fill="#9a9a9a"/><rect x="801.8" y="724" width="1" height="4" fill="#9a9a9a"/><rect x="807.9" y="724" width="1" height="4" fill="#9a9a9a"/><rect x="814.0" y="724" width="1" height="4" fill="#9a9a9a"/><rect x="820.1" y="724" width="1" height="4" fill="#9a9a9a"/><rect x="826.1" y="724" width="1" height="4" fill="#9a9a9a"/><rect x="832.2" y="724" width="1" height="4" fill="#9a9a9a"/><rect x="838.3" y="724" width="1" height="4" fill="#9a9a9a"/><rect x="844.4" y="724" width="1" height="4" fill="#9a9a9a"/><rect x="850.5" y="724" width="1" height="4" fill="#9a9a9a"/><rect x="856.5" y="724" width="1" height="4" fill="#9a9a9a"/><rect x="862.6" y="724" width="1" height="4" fill="#9a9a9a"/><rect x="868.7" y="724" width="1" height="4" fill="#9a9a9a"/><rect x="874.8" y="724" width="1" height="4" fill="#9a9a9a"/><rect x="880.9" y="724" width="1" height="4" fill="#9a9a9a"/><rect x="886.9" y="724" width="1" height="4" fill="#9a9a9a"/><rect x="893.0" y="724" width="1" height="4" fill="#9a9a9a"/><rect x="899.1" y="724" width="1" height="4" fill="#9a9a9a"/><rect x="905.2" y="724" width="1" height="4" fill="#9a9a9a"/><rect x="911.3" y="724" width="1" height="4" fill="#9a9a9a"/><rect x="917.3" y="724" width="1" height="4" fill="#9a9a9a"/><rect x="923.4" y="724" width="1" height="4" fill="#9a9a9a"/><rect x="929.5" y="724" width="1" height="4" fill="#9a9a9a"/><rect x="935.6" y="724" width="1" height="4" fill="#9a9a9a"/><rect x="941.7" y="724" width="1" height="4" fill="#9a9a9a"/><rect x="947.7" y="724" width="1" height="4" fill="#9a9a9a"/><rect x="953.8" y="724" width="1" height="4" fill="#9a9a9a"/><rect x="959.9" y="724" width="1" height="4" fill="#9a9a9a"/><rect x="966.0" y="724" width="1" height="4" fill="#9a9a9a"/></svg>
<div class="a" style="left:713px;top:735px;width:256px;height:4px;background:#ececec;border:1px solid #cfcfcf"></div>
<svg class="a" style="left:885px;top:729px" width="10" height="12" viewBox="0 0 10 12"><path d="M1 12v-7.500q0-3.500 4-3.500q4 0 4 3.500v7.500z" fill="#0a6cd0"/></svg>
<div class="a" style="left:985.5px;top:698px;width:97.0px;height:45.5px;background:#ffb6c1;border:2px dotted #c4c4c4"></div>
<div class="a" style="left:996.30px;top:701.89px;font-size:12.5px;line-height:12.5px;font-weight:bold;color:#7a0a20;">Save/update</div>
<div class="a" style="left:999.70px;top:714.49px;font-size:12.5px;line-height:12.5px;transform:scaleX(0.9663);transform-origin:0 0;font-weight:bold;color:#7a0a20;">model 2749</div>
<div class="a" style="left:1004.00px;top:727.39px;font-size:12.5px;line-height:12.5px;transform:scaleX(0.9585);transform-origin:0 0;font-weight:bold;color:#7a0a20;">&amp; A1632-1</div>
</div>
</body></html>
